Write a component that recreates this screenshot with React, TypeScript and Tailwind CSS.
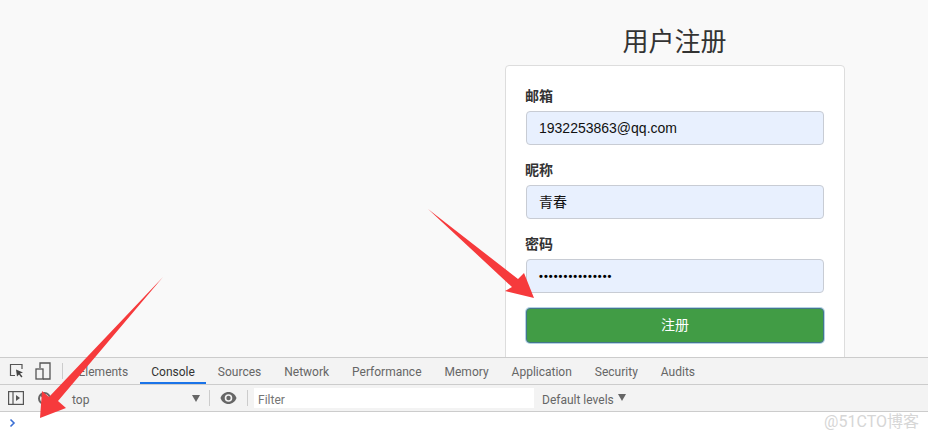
const cjk = "font-['Liberation_Sans','Noto_Sans_CJK_SC',sans-serif]";

function Field({ label, value, password }: { label: string; value: string; password?: boolean }) {
  return (
    <div className="mb-[15px]">
      <label className="mb-[5px] -ml-px block h-5 text-[14px] leading-5 font-bold text-[#333]">{label}</label>
      <div className="flex h-[34px] items-center rounded-[4px] border border-[#c8ccd4] bg-[#e8f0fe] px-3 text-[14px] text-[#111]">
        {password ? <span className="text-[11px] leading-none font-bold tracking-[1.05px] text-black">•••••••••••••••</span> : value}
      </div>
    </div>
  );
}

function Tab({ children, active }: { children: string; active?: boolean }) {
  return (
    <div className={`flex h-[26px] items-center px-[11.5px] pt-[2px] text-[12px] ${active ? "border-b-2 border-[#1a73e8] pt-[3px] text-[#333]" : "text-[#666]"}`}>
      {children}
    </div>
  );
}

function Divider() {
  return <div className="h-4 w-px bg-[#ccc]" />;
}

function Arrow({ className, viewBox, points }: { className: string; viewBox: string; points: string }) {
  return (
    <svg className={`pointer-events-none absolute ${className}`} viewBox={viewBox}>
      <polygon points={points} fill="#f63a3c" />
    </svg>
  );
}

export default function App() {
  return (
    <div className={`relative h-[438px] w-[928px] overflow-hidden bg-white ${cjk}`}>
      <div className="flex h-[357px] justify-end overflow-hidden bg-[#f9f9f9] pr-[83px]">
        <div className="w-[340px]">
          <h1 className="mt-[23px] mb-[3px] -ml-px text-center text-[26px] leading-[39px] text-[#333]">用户注册</h1>
          <div className="h-[320px] rounded-[4px] border border-[#ddd] bg-white p-5">
            <Field label="邮箱" value="1932253863@qq.com" />
            <Field label="昵称" value="青春" />
            <Field label="密码" value="" password />
            <button className="h-[35px] w-full rounded-[4px] border border-[#44768c] bg-[#419c45] pb-[1px] text-[14px] text-white shadow-[0_0_0_1px_#b4d2e4]">注册</button>
          </div>
        </div>
      </div>

      <div className="border-t border-[#ccc] font-['Roboto','Noto_Sans_CJK_SC',sans-serif]">
        <div className="flex h-[27px] items-center border-b border-[#ccc] bg-[#f3f3f3]">
          <div className="flex w-[62px] items-center pl-[9px]">
            <svg width="16" height="16" viewBox="0 0 16 16" fill="none" stroke="#555" strokeWidth="1.2">
              <path d="M6 12.5H1.500V1.500H13V6" />
              <path d="M7 6.500l7 3-3 1 2.500 3-1.200 1-2.300-3-2 2z" fill="#444" stroke="none" />
            </svg>
            <svg className="ml-[10px]" width="16" height="18" viewBox="0 0 16 18" fill="none" stroke="#555" strokeWidth="1.3">
              <path d="M5 6V1h10v16H8" />
              <rect x="1" y="7" width="7" height="10" />
            </svg>
          </div>
          <Divider />
          <div className="ml-[4px] flex">
            <Tab>Elements</Tab>
            <Tab active>Console</Tab>
            <Tab>Sources</Tab>
            <Tab>Network</Tab>
            <Tab>Performance</Tab>
            <Tab>Memory</Tab>
            <Tab>Application</Tab>
            <Tab>Security</Tab>
            <Tab>Audits</Tab>
          </div>
        </div>

        <div className="flex h-[27px] items-center border-b border-[#ccc] bg-[#f3f3f3] text-[12px] text-[#666]">
          <svg className="ml-[8px]" width="16" height="14" viewBox="0 0 16 14" fill="none" stroke="#555" strokeWidth="1.2">
            <rect x="0.6" y="0.6" width="14.8" height="12.8" />
            <path d="M5 1v12" />
            <path d="M8 4l4 3-4 3z" fill="#555" stroke="none" />
          </svg>
          <svg className="ml-[13px]" width="15" height="15" viewBox="0 0 15 15" fill="none" stroke="#666" strokeWidth="2">
            <circle cx="7.500" cy="7.500" r="5.500" />
            <path d="M3.500 3.500l8 8" />
          </svg>
          <span className="ml-[20px] w-[120px] pt-[3px]">top</span>
          <span className="h-0 w-0 border-x-[4px] border-t-[7px] border-x-transparent border-t-[#666]" />
          <div className="ml-[9px] h-4 w-px bg-[#ccc]" />
          <svg className="ml-[10px]" width="17" height="12" viewBox="0 0 17 12">
            <path d="M8.500 0C4.800 0 1.700 2.400 0.500 6c1.200 3.600 4.300 6 8 6s6.800-2.400 8-6c-1.200-3.600-4.300-6-8-6zm0 9.800a3.800 3.800 0 1 1 0-7.600 3.800 3.800 0 0 1 0 7.600z" fill="#666" />
            <circle cx="8.500" cy="6" r="2.200" fill="#666" />
          </svg>
          <div className="ml-[10px] h-4 w-px bg-[#ccc]" />
          <div className="ml-[6px] flex h-[20px] w-[280px] items-center bg-white pt-[4px] pl-[4px] text-[#757575]">Filter</div>
          <span className="ml-[8px] pt-[3px]">Default levels</span>
          <span className="ml-[4px] mb-[2px] h-0 w-0 border-x-[4px] border-t-[7px] border-x-transparent border-t-[#666]" />
        </div>

        <div className="relative h-[26px] bg-white">
          <svg className="absolute top-[6px] left-[9px]" width="7" height="10" viewBox="0 0 7 10" fill="none" stroke="#3b6fd4" strokeWidth="1.6">
            <path d="M1.500 1.500L5 5 1.500 8.500" />
          </svg>
          <span className="absolute right-[9px] bottom-[6px] text-[16px] leading-5 text-[#d6d6d6]">@51CTO博客</span>
        </div>
      </div>

      <Arrow className="top-[205px] left-[425px] h-[100px] w-[115px]" viewBox="425 205 115 100" points="428,209 518,279 524,273 534,298 505,291 512,287" />
      <Arrow className="top-[275px] left-[35px] h-[150px] w-[130px]" viewBox="35 275 130 150" points="163,277 58,401 66,408 40,418 42,391 49,397" />
    </div>
  );
}
